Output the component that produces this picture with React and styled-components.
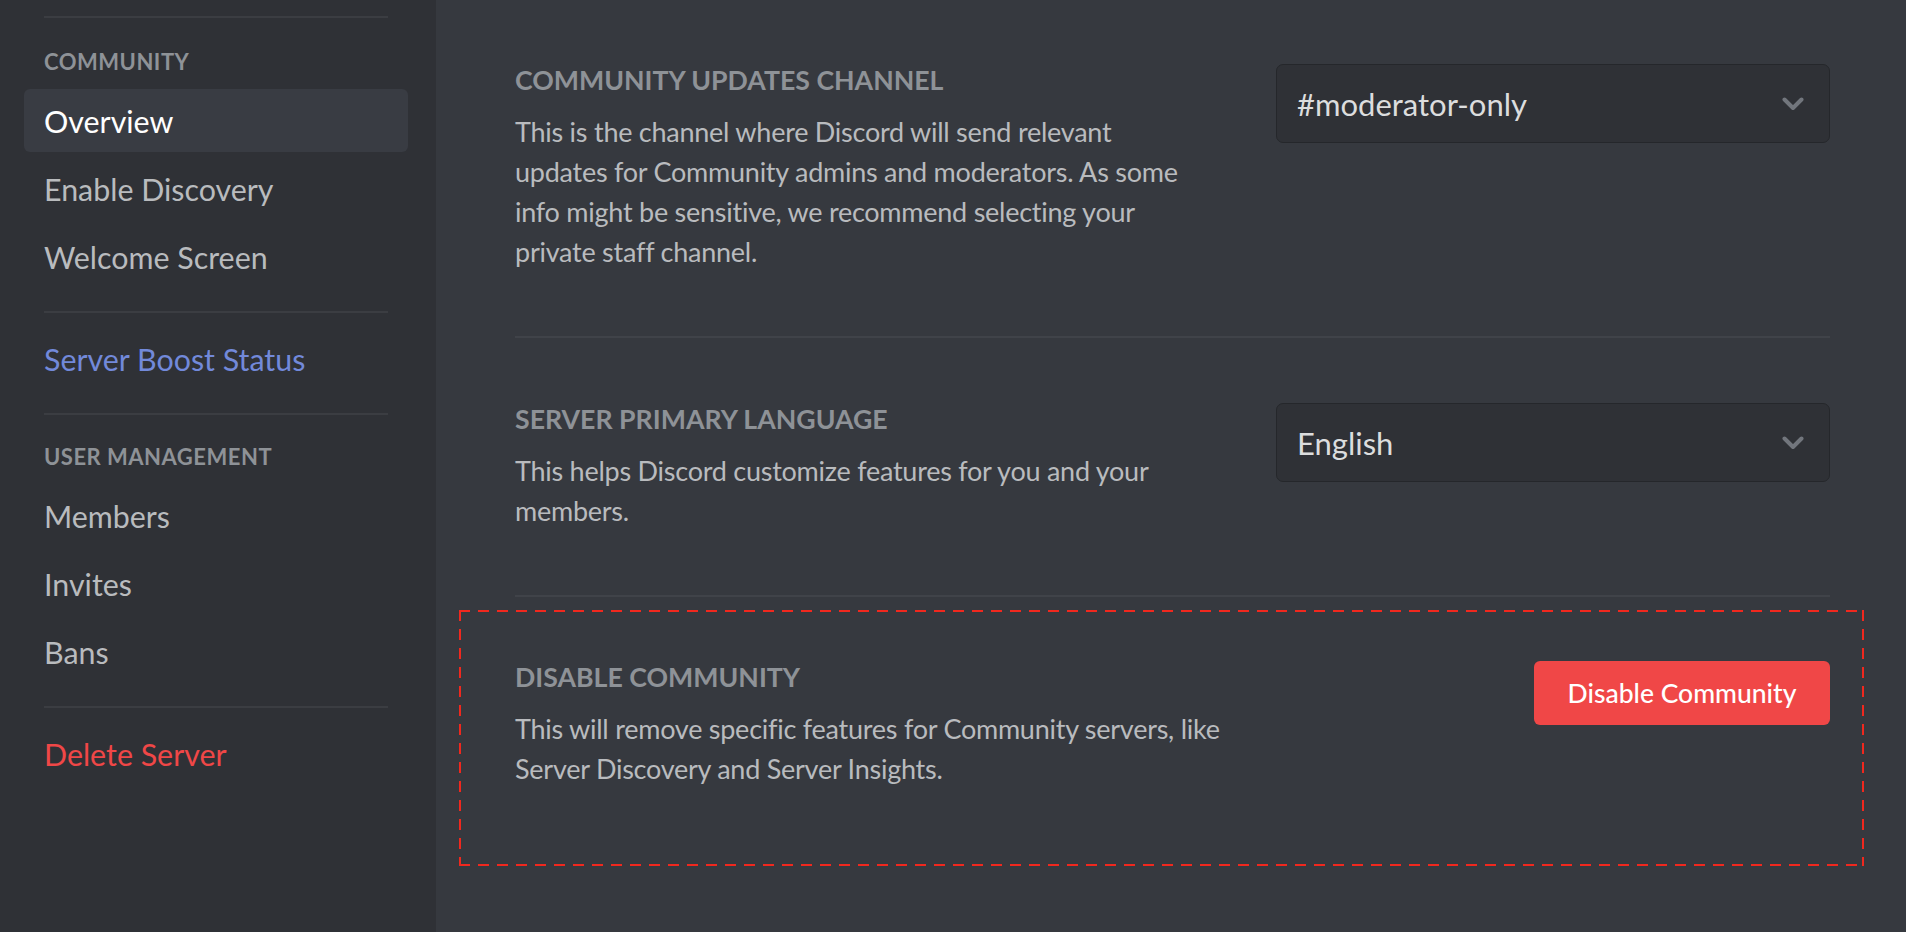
import React from 'react';
import styled, { createGlobalStyle } from 'styled-components';

const GlobalStyle = createGlobalStyle`
  html, body {
    margin: 0;
    padding: 0;
    background: #36393f;
  }
  * {
    box-sizing: border-box;
  }
`;

const Page = styled.div`
  display: flex;
  height: 100vh;
  min-height: 932px;
  overflow: hidden;
  font-family: Lato, 'Open Sans', sans-serif;
`;

const Sidebar = styled.nav`
  width: 436px;
  flex-shrink: 0;
  background: #2f3136;
  padding: 0 28px 0 24px;
  display: flex;
  flex-direction: column;
`;

const Separator = styled.div`
  height: 2px;
  margin: ${(props) => (props.$first ? '16px 20px 16px' : '18px 20px 14px')};
  background: #3b3d42;
`;

const SectionHeader = styled.h2`
  margin: 0;
  padding: 12px 20px;
  font-size: 22px;
  line-height: 31px;
  font-weight: 700;
  letter-spacing: 0.5px;
  text-transform: uppercase;
  color: #8e9297;
`;

const NavItem = styled.div`
  height: 63px;
  margin-bottom: 5px;
  padding: 0 20px;
  display: flex;
  align-items: center;
  border-radius: 6px;
  font-size: 30.4px;
  color: ${(props) => props.$color || '#b9bbbe'};
  background: ${(props) => (props.$selected ? '#393c43' : 'transparent')};
  cursor: pointer;
`;

const Main = styled.main`
  flex: 1;
  background: #36393f;
  padding: 64px 76px 0 79px;
`;

const SettingRow = styled.section`
  display: flex;
  justify-content: space-between;
  align-items: flex-start;
  padding-top: ${(props) => props.$top || 0}px;
  padding-bottom: ${(props) => props.$bottom || 0}px;
`;

const Divider = styled.div`
  height: 2px;
  background: #404349;
`;

const TextBlock = styled.div`
  display: flex;
  flex-direction: column;
`;

const Heading = styled.h3`
  margin: 0;
  font-size: 26.7px;
  line-height: 32px;
  font-weight: 700;
  text-transform: uppercase;
  color: #8e9297;
`;

const Description = styled.p`
  margin: 16px 0 0;
  max-width: ${(props) => props.$max}px;
  font-size: 27px;
  line-height: 40px;
  letter-spacing: -0.25px;
  color: #b9bbbe;
`;

const Select = styled.div`
  width: 554px;
  height: 79px;
  flex-shrink: 0;
  display: flex;
  align-items: center;
  justify-content: space-between;
  padding: 0 25px 0 20px;
  background: #2f3136;
  border: 1px solid #25272b;
  border-radius: 7px;
  font-size: 31px;
  color: #dcddde;
  cursor: pointer;
`;

const Chevron = styled.svg`
  width: 22px;
  height: 14px;
  color: #72767d;
`;

const red = '#f0281e';

const DangerZone = styled.section`
  margin: 13px -34px 0 -56px;
  padding: 51px 34px 77px 56px;
  display: flex;
  justify-content: space-between;
  align-items: flex-start;
  background:
    linear-gradient(to right, ${red} 11px, transparent 11px) top left / 19px 2px repeat-x,
    linear-gradient(to right, ${red} 11px, transparent 11px) bottom left / 19px 2px repeat-x,
    linear-gradient(to bottom, ${red} 11px, transparent 11px) top left / 2px 19px repeat-y,
    linear-gradient(to bottom, ${red} 11px, transparent 11px) top right / 2px 19px repeat-y;
`;

const DangerButton = styled.button`
  width: 296px;
  height: 64px;
  flex-shrink: 0;
  border: none;
  border-radius: 6px;
  background: #f04747;
  color: #ffffff;
  font-family: Lato, 'Open Sans', sans-serif;
  font-size: 26.5px;
  font-weight: 500;
  cursor: pointer;
`;

function Dropdown({ value }) {
  return (
    <Select>
      <span>{value}</span>
      <Chevron viewBox="0 0 22 14" fill="none">
        <polyline
          points="2.5,2.5 11,11 19.5,2.5"
          stroke="currentColor"
          strokeWidth="4"
          strokeLinecap="round"
          strokeLinejoin="round"
        />
      </Chevron>
    </Select>
  );
}

export default function App() {
  return (
    <>
      <GlobalStyle />
      <Page>
        <Sidebar>
          <Separator $first />
          <SectionHeader>Community</SectionHeader>
          <NavItem $selected $color="#ffffff">Overview</NavItem>
          <NavItem>Enable Discovery</NavItem>
          <NavItem>Welcome Screen</NavItem>
          <Separator />
          <NavItem $color="#7289da">Server Boost Status</NavItem>
          <Separator />
          <SectionHeader>User Management</SectionHeader>
          <NavItem>Members</NavItem>
          <NavItem>Invites</NavItem>
          <NavItem>Bans</NavItem>
          <Separator />
          <NavItem $color="#f04747">Delete Server</NavItem>
        </Sidebar>

        <Main>
          <SettingRow $bottom={64}>
            <TextBlock>
              <Heading>Community Updates Channel</Heading>
              <Description $max={685}>
                This is the channel where Discord will send relevant updates for
                Community admins and moderators. As some info might be
                sensitive, we recommend selecting your private staff channel.
              </Description>
            </TextBlock>
            <Dropdown value="#moderator-only" />
          </SettingRow>
          <Divider />

          <SettingRow $top={65} $bottom={64}>
            <TextBlock>
              <Heading>Server Primary Language</Heading>
              <Description $max={685}>
                This helps Discord customize features for you and your members.
              </Description>
            </TextBlock>
            <Dropdown value="English" />
          </SettingRow>
          <Divider />

          <DangerZone>
            <TextBlock>
              <Heading>Disable Community</Heading>
              <Description $max={750}>
                This will remove specific features for Community servers, like
                Server Discovery and Server Insights.
              </Description>
            </TextBlock>
            <DangerButton>Disable Community</DangerButton>
          </DangerZone>
        </Main>
      </Page>
    </>
  );
}
